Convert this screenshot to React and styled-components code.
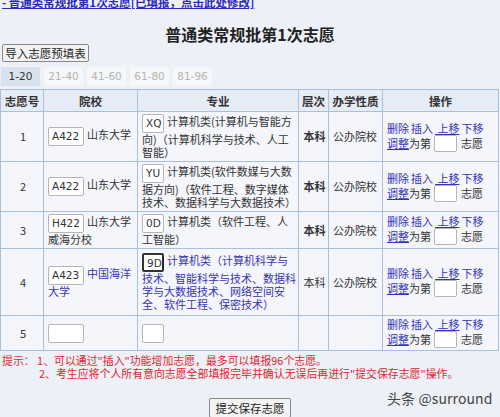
import React from 'react';
import styled, { createGlobalStyle } from 'styled-components';

const GlobalStyle = createGlobalStyle`
  html, body {
    margin: 0;
    padding: 0;
    background: #eef0f8;
    overflow: hidden;
  }
  body {
    font-family: "Noto Sans CJK SC", sans-serif;
    font-size: 11px;
    color: #222;
  }
`;

const Page = styled.div`
  width: 500px;
  height: 417px;
  position: relative;
  overflow: hidden;
`;

const TopLink = styled.a`
  display: block;
  margin: -5px 0 0 0;
  padding-left: 2px;
  font-weight: bold;
  font-size: 11.5px;
  line-height: 14px;
  color: #2b2bb5;
  text-decoration: underline;
  white-space: nowrap;
`;

const Title = styled.h1`
  margin: 15px 0 0 0;
  text-align: center;
  font-size: 16px;
  line-height: 20px;
  font-weight: bold;
  color: #222;
`;

const PlainButton = styled.button`
  font-family: "Noto Sans CJK SC", sans-serif;
  font-size: 11.5px;
  line-height: 14px;
  padding: 0;
  background: #f3f3f3;
  border: 1px solid #8a8a8a;
  border-radius: 2px;
  color: #222;
`;

const ImportButton = styled(PlainButton)`
  display: block;
  margin: 0 0 0 2px;
  height: 18px;
  width: 87px;
`;

const Tabs = styled.div`
  display: flex;
  gap: 4px;
  margin: 5px 0 0 1px;
`;

const Tab = styled.div`
  width: 39px;
  height: 19px;
  line-height: 19px;
  text-align: center;
  font-family: "DejaVu Sans", sans-serif;
  font-size: 10.5px;
  background: ${(p) => (p.active ? '#d9e3ee' : '#f6f7f9')};
  color: ${(p) => (p.active ? '#333' : '#b4b4b4')};
`;

const Table = styled.table`
  margin-top: 3px;
  width: 498px;
  border-collapse: collapse;
  table-layout: fixed;
  background: #f4f6fb;
`;

const Th = styled.th`
  height: 21px;
  padding: 0;
  border: 1px solid #a9c0da;
  background: #e6ecf5;
  font-size: 11.5px;
  font-weight: bold;
  color: #333;
`;

const Row = styled.tr`
  height: ${(p) => (p.h ? `${p.h}px` : 'auto')};
`;

const Td = styled.td`
  border: 1px solid #a9c0da;
  padding: 2px 2px 2px 4px;
  vertical-align: middle;
  text-align: ${(p) => (p.center ? 'center' : 'left')};
  line-height: 13px;
  color: ${(p) => (p.blue ? '#3535b0' : '#333')};
  font-weight: ${(p) => (p.bold ? 'bold' : 'normal')};
`;

const MajorCell = styled(Td)`
  white-space: nowrap;
  font-size: 11px;
`;

const CodeInput = styled.span`
  display: inline-block;
  vertical-align: middle;
  box-sizing: border-box;
  width: ${(p) => p.w}px;
  height: 19px;
  line-height: 17px;
  padding-left: 3px;
  margin: 0 3px 0 0;
  background: #fff;
  border: ${(p) => (p.focus ? '2px solid #333' : '1px solid #b5b5b5')};
  border-radius: 2px;
  font-family: "DejaVu Sans", sans-serif;
  font-size: 10.5px;
  color: #333;
`;

const Cursor = styled.span`
  display: inline-block;
  width: 1px;
  height: 12px;
  background: #222;
  vertical-align: -2px;
  margin-left: 1px;
`;

const Ops = styled.div`
  display: flex;
  flex-direction: column;
  font-size: 11px;
`;

const OpLine = styled.div`
  display: flex;
  align-items: center;
  gap: 2px;
  white-space: nowrap;
`;

const OpLink = styled.a`
  color: #3333b8;
  text-decoration: ${(p) => (p.u ? 'underline' : 'none')};
`;

const SmallBox = styled.span`
  display: inline-block;
  width: 21px;
  height: 15px;
  background: #fff;
  border: 1px solid #b5b5b5;
  border-radius: 2px;
  margin: 0 2px 0 1px;
`;

const Hints = styled.div`
  margin: 3px 0 0 2px;
  color: #e0262c;
  font-size: 10.9px;
  line-height: 13px;
`;

const HintLine = styled.div`
  padding-left: ${(p) => p.indent || 0}px;
  white-space: nowrap;
`;

const Footer = styled.div`
  display: flex;
  justify-content: center;
  margin-top: 18px;
`;

const SubmitButton = styled(PlainButton)`
  height: 20px;
  width: 82px;
`;

const Watermark = styled.div`
  position: absolute;
  left: 387px;
  top: 388px;
  font-size: 14px;
  color: #444;
  letter-spacing: 0.1px;
`;

const rows = [
  {
    n: 1, sc: 'A422', school: '山东大学', mc: 'XQ',
    major: ['计算机类(计算机与智能方', '向)（计算机科学与技术、人工', '智能）'],
    level: '本科', bold: true, type: '公办院校',
  },
  {
    n: 2, sc: 'A422', school: '山东大学', mc: 'YU',
    major: ['计算机类(软件数媒与大数', '据方向)（软件工程、数字媒体', '技术、数据科学与大数据技术）'],
    level: '本科', bold: true, type: '公办院校',
  },
  {
    n: 3, sc: 'H422', school: '山东大学威海分校', mc: '0D',
    major: ['计算机类（软件工程、人', '工智能）'],
    level: '本科', bold: true, type: '公办院校',
  },
  {
    n: 4, sc: 'A423', school: '中国海洋大学', mc: '9D', focus: true, blue: true,
    major: ['计算机类（计算机科学与', '技术、智能科学与技术、数据科', '学与大数据技术、网络空间安', '全、软件工程、保密技术）'],
    level: '本科', bold: false, type: '公办院校',
  },
];

function Operations() {
  return (
    <Ops>
      <OpLine>
        <OpLink>删除</OpLink>
        <OpLink>插入</OpLink>
        <OpLink u>&nbsp;上移</OpLink>
        <OpLink>下移</OpLink>
      </OpLine>
      <OpLine>
        <span><OpLink u>调整</OpLink>为第</span>
        <SmallBox />
        <span>志愿</span>
      </OpLine>
    </Ops>
  );
}

export default function App() {
  return (
    <Page>
      <GlobalStyle />
      <TopLink>- 普通类常规批第1次志愿[已填报，点击此处修改]</TopLink>
      <Title>普通类常规批第1次志愿</Title>
      <ImportButton>导入志愿预填表</ImportButton>
      <Tabs>
        <Tab active>1-20</Tab>
        <Tab>21-40</Tab>
        <Tab>41-60</Tab>
        <Tab>61-80</Tab>
        <Tab>81-96</Tab>
      </Tabs>
      <Table>
        <colgroup>
          <col style={{ width: 43 }} />
          <col style={{ width: 94 }} />
          <col style={{ width: 161 }} />
          <col style={{ width: 30 }} />
          <col style={{ width: 54 }} />
          <col style={{ width: 116 }} />
        </colgroup>
        <thead>
          <tr>
            <Th>志愿号</Th>
            <Th>院校</Th>
            <Th>专业</Th>
            <Th>层次</Th>
            <Th>办学性质</Th>
            <Th>操作</Th>
          </tr>
        </thead>
        <tbody>
          {rows.map((r) => (
            <Row key={r.n} h={r.n === 4 ? 67 : 0}>
              <Td center>{r.n}</Td>
              <Td blue={r.blue}>
                <CodeInput w={36}>{r.sc}</CodeInput>
                {r.school}
              </Td>
              <MajorCell blue={r.blue}>
                <CodeInput w={22} focus={r.focus}>
                  {r.mc}
                  {r.focus && <Cursor />}
                </CodeInput>
                {r.major.map((line, i) => (
                  <React.Fragment key={i}>
                    {i > 0 && <br />}
                    {line}
                  </React.Fragment>
                ))}
              </MajorCell>
              <Td center bold={r.bold}>{r.level}</Td>
              <Td>{r.type}</Td>
              <Td><Operations /></Td>
            </Row>
          ))}
          <Row h={34}>
            <Td center>5</Td>
            <Td><CodeInput w={36} /></Td>
            <Td><CodeInput w={22} /></Td>
            <Td />
            <Td />
            <Td><Operations /></Td>
          </Row>
        </tbody>
      </Table>
      <Hints>
        <HintLine>提示：&nbsp;1、可以通过"插入"功能增加志愿，最多可以填报96个志愿。</HintLine>
        <HintLine indent={37}>2、考生应将个人所有意向志愿全部填报完毕并确认无误后再进行"提交保存志愿"操作。</HintLine>
      </Hints>
      <Footer>
        <SubmitButton>提交保存志愿</SubmitButton>
      </Footer>
      <Watermark>头条 @surround</Watermark>
    </Page>
  );
}
